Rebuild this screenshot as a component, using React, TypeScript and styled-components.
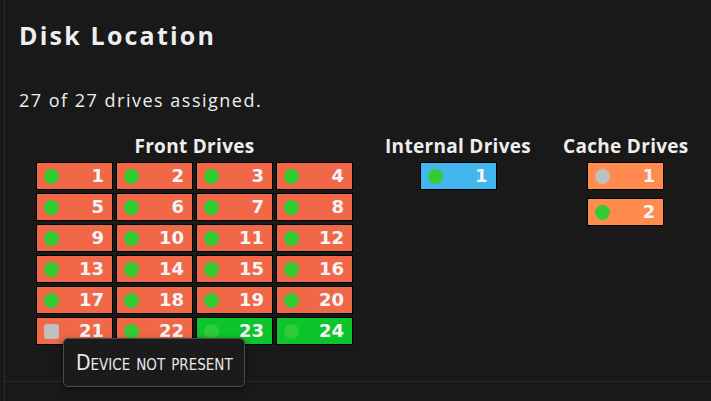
import React from 'react';
import styled, { createGlobalStyle } from 'styled-components';

const Global = createGlobalStyle`
  html, body { margin: 0; padding: 0; background: #191919; }
  body { font-family: "Open Sans", "Noto Sans", sans-serif; color: #eeeeee; }
`;

const Frame = styled.div`
  margin-left: 4px;
  border-left: 1px solid #2a2a2a;
  height: 401px;
  overflow: hidden;
`;

const Section = styled.section`
  box-sizing: border-box;
  height: 382px;
  border-bottom: 1px solid #2a2a2a;
  padding: 18px 0 0 14px;
`;

const Title = styled.h2`
  margin: 0;
  font-size: 25px;
  line-height: 34px;
  font-weight: 700;
  letter-spacing: 2.2px;
  color: #eeeeee;
`;

const Summary = styled.p`
  margin: 36px 0 0;
  font-size: 18px;
  line-height: 25px;
  letter-spacing: 1.5px;
  color: #eeeeee;
`;

const Groups = styled.div`
  display: flex;
  align-items: flex-start;
  gap: 32px;
  margin: 21px 0 0 17px;
`;

const Group = styled.div`
  display: flex;
  flex-direction: column;
  align-items: center;
`;

const GroupTitle = styled.h3`
  margin: 0 0 4px;
  font-size: 19px;
  line-height: 24px;
  font-weight: 700;
  letter-spacing: 0.3px;
  white-space: nowrap;
  color: #eeeeee;
`;

const Grid = styled.div<{ $cols: number; $gap: number }>`
  display: grid;
  grid-template-columns: repeat(${p => p.$cols}, 77px);
  gap: ${p => p.$gap}px 3px;
`;

const Slot = styled.div`
  position: relative;
`;

const Tile = styled.div<{ $bg: string }>`
  box-sizing: border-box;
  width: 77px;
  height: 28px;
  border: 1px solid #000;
  background: ${p => p.$bg};
  display: flex;
  align-items: center;
  justify-content: space-between;
  padding: 0 8px 0 7px;
`;

const Dot = styled.span<{ $color: string; $square?: boolean }>`
  width: 15px;
  height: 15px;
  border-radius: ${p => (p.$square ? '3px' : '50%')};
  background: ${p => p.$color};
`;

const Num = styled.span`
  font-family: "DejaVu Sans", sans-serif;
  font-size: 18px;
  font-weight: 700;
  line-height: 1;
  color: #f5f5f5;
`;

const Tooltip = styled.div`
  position: absolute;
  left: 27px;
  top: 21px;
  z-index: 2;
  box-sizing: border-box;
  width: 182px;
  height: 49px;
  display: flex;
  align-items: center;
  padding-left: 12px;
  background: #1b1b1b;
  border: 1px solid #4a4a4a;
  border-radius: 5px;
  box-shadow: 0 2px 6px rgba(0, 0, 0, 0.5);
  font-family: "DejaVu Sans Condensed", "DejaVu Sans", sans-serif;
  font-variant: small-caps;
  font-size: 21px;
  color: #e8e8e8;
  white-space: nowrap;
`;

const ORANGE = '#f06848';
const GREEN_BAY = '#0cc42c';
const BLUE = '#43b6ee';
const CACHE = '#ff8b50';
const OK = '#33cc33';
const IDLE = '#c0c0c0';

type Drive = { n: number; bg: string; dot: string; square?: boolean; tip?: string };

const front: Drive[] = Array.from({ length: 24 }, (_, i) => {
  const n = i + 1;
  if (n === 21) return { n, bg: ORANGE, dot: IDLE, square: true, tip: 'Device not present' };
  if (n >= 23) return { n, bg: GREEN_BAY, dot: '#2fcb38' };
  return { n, bg: ORANGE, dot: OK };
});

const internal: Drive[] = [{ n: 1, bg: BLUE, dot: OK }];
const cache: Drive[] = [
  { n: 1, bg: CACHE, dot: IDLE },
  { n: 2, bg: CACHE, dot: OK },
];

const DriveTile = ({ d }: { d: Drive }) => (
  <Slot>
    <Tile $bg={d.bg}>
      <Dot $color={d.dot} $square={d.square} />
      <Num>{d.n}</Num>
    </Tile>
    {d.tip && <Tooltip>{d.tip}</Tooltip>}
  </Slot>
);

export default function App() {
  return (
    <>
      <Global />
      <Frame>
        <Section>
          <Title>Disk Location</Title>
          <Summary>27 of 27 drives assigned.</Summary>
          <Groups>
            <Group>
              <GroupTitle>Front Drives</GroupTitle>
              <Grid $cols={4} $gap={3}>
                {front.map(d => <DriveTile key={d.n} d={d} />)}
              </Grid>
            </Group>
            <Group>
              <GroupTitle>Internal Drives</GroupTitle>
              <Grid $cols={1} $gap={3}>
                {internal.map(d => <DriveTile key={d.n} d={d} />)}
              </Grid>
            </Group>
            <Group>
              <GroupTitle>Cache Drives</GroupTitle>
              <Grid $cols={1} $gap={8}>
                {cache.map(d => <DriveTile key={d.n} d={d} />)}
              </Grid>
            </Group>
          </Groups>
        </Section>
      </Frame>
    </>
  );
}
